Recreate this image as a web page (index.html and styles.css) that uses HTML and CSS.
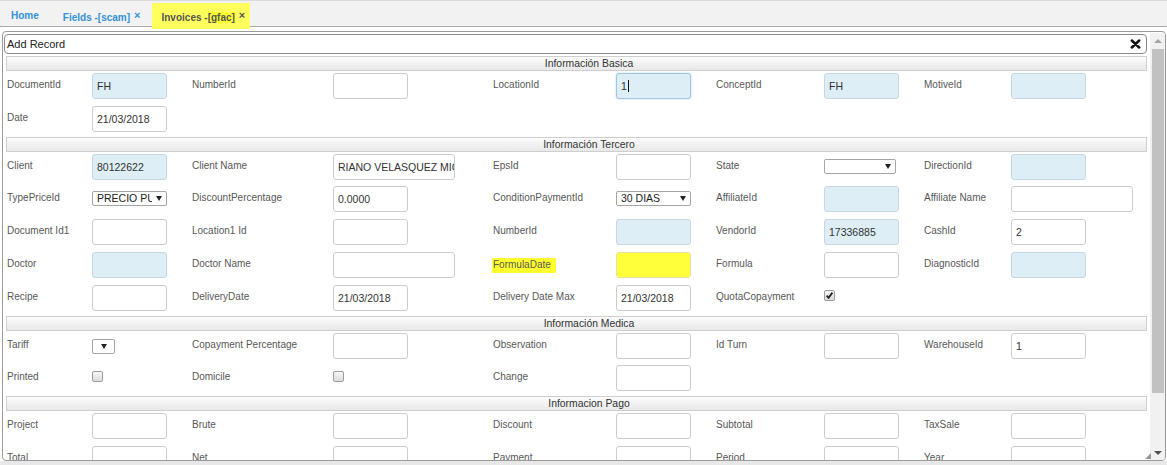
FILE: index.html
```html
<!DOCTYPE html>
<html lang="es">
<head>
<meta charset="utf-8">
<title>Invoices</title>
<link rel="stylesheet" href="styles.css">
</head>
<body>
<div class="tabbar">
  <div class="tab"><span class="tab-label">Home</span></div>
  <div class="tab"><span class="tab-label">Fields -[scam]</span><span class="tab-close">×</span></div>
  <div class="tab tab-active"><span class="tab-label">Invoices -<span class="tab-hl">[gfac]</span></span><span class="tab-close">×</span></div>
</div>
<div class="workspace">
  <div class="dialog">
    <div class="content">
      <div class="titlebar">
        <span class="title">Add Record</span>
        <svg class="close" width="11" height="10" viewBox="0 0 11 10"><path d="M1.8 1.5 L9.2 8.5 M9.2 1.5 L1.8 8.5" stroke="#111" stroke-width="2.5" stroke-linecap="round"/></svg>
      </div>
      <div class="form">
        <div class="section">Información Basica</div>
        <div class="row">
          <div class="label">DocumentId</div><div><div class="field ro">FH</div></div>
          <div class="label">NumberId</div><div><div class="field"></div></div>
          <div class="label">LocationId</div><div><div class="field ro focus">1<span class="caret"></span></div></div>
          <div class="label">ConceptId</div><div><div class="field ro">FH</div></div>
          <div class="label">MotiveId</div><div><div class="field ro"></div></div>
        </div>
        <div class="row">
          <div class="label">Date</div><div><div class="field">21/03/2018</div></div>
        </div>

        <div class="section">Información Tercero</div>
        <div class="row">
          <div class="label">Client</div><div><div class="field ro">80122622</div></div>
          <div class="label">Client Name</div><div><div class="field wide">RIANO VELASQUEZ MIGUEL</div></div>
          <div class="label">EpsId</div><div><div class="field"></div></div>
          <div class="label">State</div><div><div class="select s72"><span class="select-text"></span><span class="arrow"></span></div></div>
          <div class="label">DirectionId</div><div><div class="field ro"></div></div>
        </div>
        <div class="row">
          <div class="label">TypePriceId</div><div><div class="select"><span class="select-text">PRECIO PUBLICO</span><span class="arrow"></span></div></div>
          <div class="label">DiscountPercentage</div><div><div class="field">0.0000</div></div>
          <div class="label">ConditionPaymentId</div><div><div class="select"><span class="select-text">30 DIAS</span><span class="arrow"></span></div></div>
          <div class="label">AffiliateId</div><div><div class="field ro"></div></div>
          <div class="label">Affiliate Name</div><div><div class="field wide"></div></div>
        </div>
        <div class="row">
          <div class="label">Document Id1</div><div><div class="field"></div></div>
          <div class="label">Location1 Id</div><div><div class="field"></div></div>
          <div class="label">NumberId</div><div><div class="field ro"></div></div>
          <div class="label">VendorId</div><div><div class="field ro">17336885</div></div>
          <div class="label">CashId</div><div><div class="field">2</div></div>
        </div>
        <div class="row">
          <div class="label">Doctor</div><div><div class="field ro"></div></div>
          <div class="label">Doctor Name</div><div><div class="field wide"></div></div>
          <div class="label"><span class="label-hl">FormulaDate</span></div><div><div class="field yellow"></div></div>
          <div class="label">Formula</div><div><div class="field"></div></div>
          <div class="label">DiagnosticId</div><div><div class="field ro"></div></div>
        </div>
        <div class="row">
          <div class="label">Recipe</div><div><div class="field"></div></div>
          <div class="label">DeliveryDate</div><div><div class="field">21/03/2018</div></div>
          <div class="label">Delivery Date Max</div><div><div class="field">21/03/2018</div></div>
          <div class="label">QuotaCopayment</div><div><div class="check checked"><svg width="9" height="9" viewBox="0 0 9 9"><path d="M1.6 4.6 L3.6 6.8 L7.4 1.6" fill="none" stroke="#222" stroke-width="1.8"/></svg></div></div>
        </div>

        <div class="section">Información Medica</div>
        <div class="row">
          <div class="label">Tariff</div><div><div class="select s23"><span class="arrow"></span></div></div>
          <div class="label">Copayment Percentage</div><div><div class="field"></div></div>
          <div class="label">Observation</div><div><div class="field"></div></div>
          <div class="label">Id Turn</div><div><div class="field"></div></div>
          <div class="label">WarehouseId</div><div><div class="field">1</div></div>
        </div>
        <div class="row">
          <div class="label">Printed</div><div><div class="check check-low"></div></div>
          <div class="label">Domicile</div><div><div class="check check-low"></div></div>
          <div class="label">Change</div><div><div class="field"></div></div>
        </div>

        <div class="section">Informacion Pago</div>
        <div class="row">
          <div class="label">Project</div><div><div class="field"></div></div>
          <div class="label">Brute</div><div><div class="field"></div></div>
          <div class="label">Discount</div><div><div class="field"></div></div>
          <div class="label">Subtotal</div><div><div class="field"></div></div>
          <div class="label">TaxSale</div><div><div class="field"></div></div>
        </div>
        <div class="row">
          <div class="label">Total</div><div><div class="field"></div></div>
          <div class="label">Net</div><div><div class="field"></div></div>
          <div class="label">Payment</div><div><div class="field"></div></div>
          <div class="label">Period</div><div><div class="field"></div></div>
          <div class="label">Year</div><div><div class="field"></div></div>
        </div>
      </div>
    </div>
    <div class="scrollbar">
      <div class="sb-btn"><span class="sb-up"></span></div>
      <div class="sb-track"><div class="sb-thumb"></div></div>
      <div class="sb-btn"><span class="sb-down"></span></div>
    </div>
    <svg class="grip" width="6" height="6" viewBox="0 0 6 6"><path d="M6 0 L6 6 L0 6 Z" fill="#9a9a9a"/></svg>
  </div>
</div>
</body>
</html>
```
FILE: styles.css
```css
* { box-sizing: border-box; }
html, body { margin: 0; padding: 0; }
body {
  font-family: "Liberation Sans", Arial, sans-serif;
  background: #e8e8e8;
  width: 1167px;
  height: 465px;
  overflow: hidden;
}

/* Tabs */
.tabbar {
  display: flex;
  align-items: flex-end;
  gap: 6px;
  height: 27px;
  padding-left: 2px;
  background: #f2f2f2;
  border-top: 1px solid #dadada;
  border-bottom: 1px solid #a9a9a9;
}
.tab {
  position: relative;
  z-index: 1;
  height: 26px;
  margin-bottom: -3px;
  padding: 0 6px 0 9px;
  line-height: 25px;
  font-size: 10px;
  font-weight: bold;
  color: #3391d8;
  white-space: nowrap;
}
.tab:first-child { padding-right: 9px; }
.tab-close {
  margin-left: 4px;
  font-size: 11px;
  font-weight: bold;
  vertical-align: 2px;
}
.tab-active {
  background: #ffff5e;
  color: #555;
  padding-right: 5px;
}
.tab-hl { background: #ffff2e; }

/* Workspace / dialog */
.workspace {
  height: 434px;
  padding: 4px 1px 0 2px;
  background: #fff;
}
.dialog {
  position: relative;
  display: flex;
  gap: 3px;
  height: 430px;
  padding: 1px 0 0 1px;
  border: 1px solid #9b9b9b;
  border-radius: 4px;
  overflow: hidden;
  background: #fff;
}
.content {
  width: 1143px;
  flex: none;
  height: 100%;
  overflow: hidden;
  padding-top: 1px;
}
.titlebar {
  display: flex;
  align-items: center;
  justify-content: space-between;
  height: 20px;
  padding: 0 5px 0 2px;
  border: 1px solid #8a8a8a;
  border-radius: 4px;
  background: #fff;
  font-size: 11px;
  color: #222;
}
.close { display: block; }

/* Form */
.form {
  margin-top: 2px;
  padding-left: 2px;
}
.section {
  height: 15px;
  padding-left: 25px;
  border: 1px solid #cfcfcf;
  background: linear-gradient(#fcfcfc, #e8e8e8);
  text-align: center;
  font-size: 10.4px;
  line-height: 13px;
  color: #333;
}
.row {
  display: grid;
  grid-template-columns: 85px 100px 141px 160px 123px 100px 108px 100px 87px 1fr;
  align-items: start;
  height: 32.8px;
  padding-left: 1px;
}
.label {
  padding-top: 8px;
  font-size: 10px;
  line-height: 12px;
  color: #585858;
  white-space: nowrap;
}
.label-hl {
  display: inline-block;
  margin-left: -1px;
  padding: 1px 5px 2px 1px;
  background: #ffff2e;
}
.field {
  width: 75px;
  height: 26px;
  margin-top: 2px;
  padding: 1px 4px 0;
  border: 1px solid #cccccc;
  border-radius: 3px;
  background: #fff;
  font-size: 10.5px;
  line-height: 23px;
  color: #333;
  white-space: nowrap;
  overflow: hidden;
}
.field.wide { width: 122px; }
.field.ro { background: #ddeef6; border-color: #c6d7df; }
.field.focus { border-color: #a3c6dc; box-shadow: 0 0 2px rgba(90, 150, 200, 0.45); }
.field.yellow { background: #ffff3a; border-color: #e2e2a8; }
.caret {
  display: inline-block;
  width: 1px;
  height: 12px;
  margin-left: 1px;
  background: #111;
  vertical-align: -2px;
}

.select {
  display: flex;
  align-items: center;
  width: 75px;
  height: 15px;
  margin-top: 7px;
  padding: 0 4px 0 4px;
  border: 1px solid #a6a6a6;
  border-radius: 2px;
  background: #fff;
  font-size: 10.5px;
  color: #222;
}
.select.s72 { width: 72px; }
.select.s23 { width: 23px; margin-top: 8px; justify-content: center; padding: 0; }
.select-text {
  flex: 1;
  overflow: hidden;
  white-space: nowrap;
  line-height: 13px;
  margin-right: 4px;
}
.arrow {
  flex: none;
  width: 0;
  height: 0;
  border-left: 3px solid transparent;
  border-right: 3px solid transparent;
  border-top: 5px solid #222;
}

.check {
  display: flex;
  align-items: center;
  justify-content: center;
  width: 11px;
  height: 11px;
  margin-top: 7px;
  border: 1px solid #9c9c9c;
  border-radius: 2px;
  background: linear-gradient(#f7f7f7, #dcdcdc);
}
.check-low { margin-top: 8px; }
.check svg { display: block; }

/* Scrollbar */
.scrollbar {
  display: flex;
  flex-direction: column;
  width: 15px;
  flex: none;
  height: 428px;
  background: #f1f1f1;
}
.sb-btn {
  display: flex;
  align-items: center;
  justify-content: center;
  height: 16px;
  flex: none;
}
.sb-up {
  width: 0; height: 0;
  border-left: 4px solid transparent;
  border-right: 4px solid transparent;
  border-bottom: 4px solid #a3a3a3;
}
.sb-down {
  width: 0; height: 0;
  border-left: 4px solid transparent;
  border-right: 4px solid transparent;
  border-top: 4px solid #505050;
}
.sb-track { flex: 1; }
.sb-thumb {
  height: 344px;
  margin: 0 1px 0 2px;
  background: #c1c1c1;
}
.grip {
  position: absolute;
  left: 1142px;
  top: 421px;
}
```
